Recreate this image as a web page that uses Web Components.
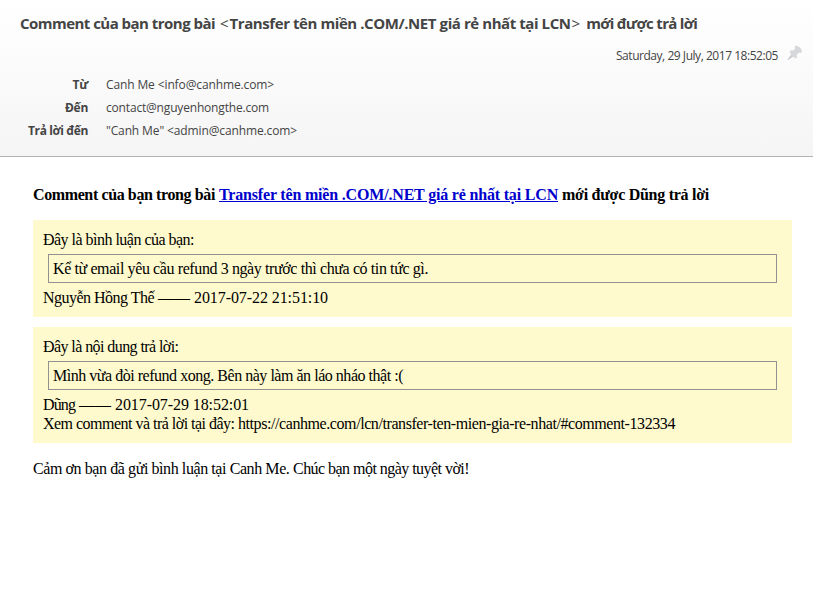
<!DOCTYPE html>
<html lang="vi"><head><meta charset="utf-8"><title>Mail</title>
<style>body{margin:0;background:#fff;width:813px;height:599px;overflow:hidden}</style></head><body>
<mail-message></mail-message>
<script>
const def=(name,html)=>customElements.define(name,class extends HTMLElement{
  constructor(){super();this.attachShadow({mode:'open'}).innerHTML=html;}
});
// Text run tracked to the width given by its "w" attribute.
customElements.define('fit-text',class extends HTMLElement{
  constructor(){super();this.attachShadow({mode:'open'}).innerHTML='<style>:host{display:inline;white-space:nowrap}</style><slot></slot>';}
  connectedCallback(){
    const w=+this.getAttribute('w');if(!w)return;
    const r=document.createRange();r.selectNodeContents(this);
    const n=r.getBoundingClientRect().width;
    this.style.letterSpacing=(w-n)/this.textContent.length+'px';
  }
});
def('pin-icon',`<style>:host{display:block;width:18px;height:18px}svg{display:block}</style>
<svg width="18" height="18" viewBox="0 0 18 18"><path d="M4.6 7.2L6 6.2L8.4 6.6L10.2 4.6L9.6 2.6L11.2 1.6Q16 3 17 7.2L16 9L14 8.5L11.8 10.4L12.2 13L11 14.4Q6 12.5 4.6 7.2Z" fill="#d6d8dc"/><path d="M6.4 10.4L2.4 15.6L3.2 16L8.2 12.4Z" fill="#c9ccd1"/></svg>`);
def('header-row',`<style>:host{display:grid;grid-template-columns:88px 1fr;column-gap:18px;height:23px;line-height:23px;font-size:12px;white-space:nowrap}
.l{text-align:right;font-weight:700}</style><div class="l"><slot name="label"></slot></div><div><slot></slot></div>`);
def('mail-header',`<style>:host{display:block;box-sizing:border-box;height:157px;border-bottom:1px solid #b4b4b4;background:linear-gradient(#fff,#f5f5f5);font-family:"Open Sans","Noto Sans",sans-serif;color:#444}
h1{display:flex;margin:0;padding:12px 0 0 20px;font-size:15px;line-height:22px;font-weight:700;white-space:nowrap}
h1 i{font-style:normal;font-weight:400}
.lt{margin:0 1px 0 5px}.gt{margin:0 6px 0 1px}
.date{display:flex;justify-content:flex-end;gap:7px;padding:10px 10px 0 0;height:20px;font-size:12px;line-height:23px}
.rows{padding-top:9px}</style>
<h1><fit-text w="195">Comment của bạn trong bài</fit-text><i class="lt">&lt;</i><fit-text w="341">Transfer tên miền .COM/.NET giá rẻ nhất tại LCN</fit-text><i class="gt">&gt;</i><fit-text w="111">mới được trả lời</fit-text></h1>
<div class="date"><fit-text w="162">Saturday, 29 July, 2017 18:52:05</fit-text><pin-icon></pin-icon></div>
<div class="rows"><header-row><fit-text w="15.5" slot="label">Từ</fit-text><fit-text w="168">Canh Me &lt;info@canhme.com&gt;</fit-text></header-row>
<header-row><fit-text w="23" slot="label">Đến</fit-text><fit-text w="163">contact@nguyenhongthe.com</fit-text></header-row>
<header-row><fit-text w="60" slot="label">Trả lời đến</fit-text><fit-text w="191">"Canh Me" &lt;admin@canhme.com&gt;</fit-text></header-row></div>`);
def('comment-card',`<style>:host{display:block;background:#fffacd;padding:10px;margin-bottom:10px;line-height:19px}
.q{border:1px solid #919191;margin:5px;padding:4px}</style><slot name="title"></slot><div class="q"><slot name="quote"></slot></div><slot></slot>`);
def('mail-body',`<style>:host{display:block;padding:28px 21px 0 33px;font:16px/19px "Liberation Serif",serif;color:#000}
.h{display:flex;gap:4px;font-weight:bold;margin-bottom:16px;white-space:nowrap}a{color:#0000cc}.end{margin-top:16px}</style>
<div class="h"><fit-text w="182">Comment của bạn trong bài</fit-text><a href="#"><fit-text w="339">Transfer tên miền .COM/.NET giá rẻ nhất tại LCN</fit-text></a><fit-text w="147">mới được Dũng trả lời</fit-text></div>
<comment-card><div slot="title"><fit-text w="151">Đây là bình luận của bạn:</fit-text></div><div slot="quote"><fit-text w="375">Kể từ email yêu cầu refund 3 ngày trước thì chưa có tin tức gì.</fit-text></div><fit-text w="111">Nguyễn Hồng Thế</fit-text> —— <fit-text w="134">2017-07-22 21:51:10</fit-text></comment-card>
<comment-card><div slot="title"><fit-text w="135.5">Đây là nội dung trả lời:</fit-text></div><div slot="quote"><fit-text w="350">Mình vừa đòi refund xong. Bên này làm ăn láo nháo thật :(</fit-text></div><fit-text w="32">Dũng</fit-text> —— <fit-text w="134">2017-07-29 18:52:01</fit-text><br><fit-text w="195">Xem comment và trả lời tại đây: </fit-text><fit-text w="437">https://canhme.com/lcn/transfer-ten-mien-gia-re-nhat/#comment-132334</fit-text></comment-card>
<div class="end"><fit-text w="260">Cảm ơn bạn đã gửi bình luận tại Canh Me. </fit-text><fit-text w="176">Chúc bạn một ngày tuyệt vời!</fit-text></div>`);
def('mail-message',`<style>:host{display:block}</style><mail-header></mail-header><mail-body></mail-body>`);
</script></body></html>
